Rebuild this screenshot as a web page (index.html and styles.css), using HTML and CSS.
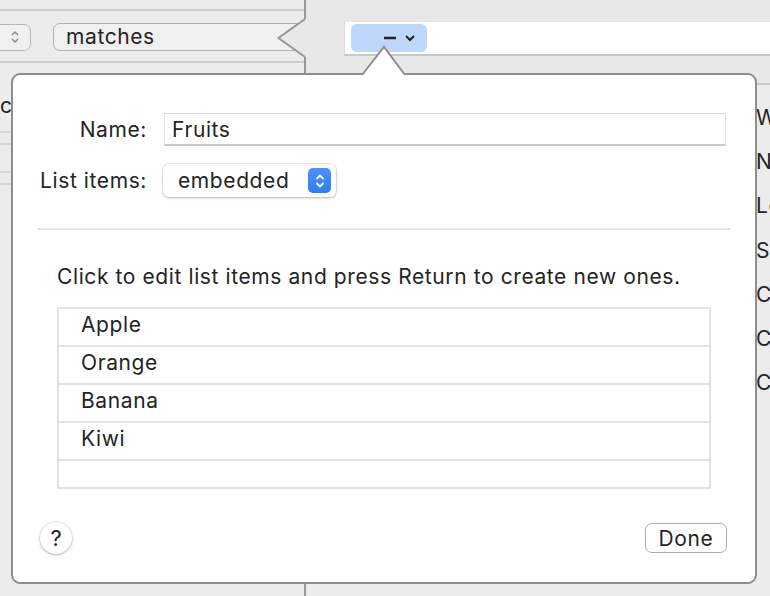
FILE: index.html
```html
<!DOCTYPE html>
<html lang="en">
<head>
    <meta charset="UTF-8">
    <title>List Editor</title>
    <link rel="stylesheet" href="styles.css">
</head>
<body>
    <div class="window">
        <div class="sidebar">
            <div class="sb-head"></div>
            <div class="cond-row">
                <div class="stepper">
                    <svg width="10" height="16" viewBox="0 0 10 16">
                        <polyline points="2,6 5,3 8,6" fill="none" stroke="#8a8a8a" stroke-width="1.5"/>
                        <polyline points="2,10 5,13 8,10" fill="none" stroke="#8a8a8a" stroke-width="1.5"/>
                    </svg>
                </div>
                <div class="cond-field">matches</div>
            </div>
            <div class="sb-item">c</div>
            <div class="sb-rule"></div>
            <div class="sb-rule short"></div>
            <div class="sb-rule tall"></div>
            <div class="sb-rule short"></div>
        </div>
        <div class="main">
            <div class="token-bar">
                <span class="token">
                    <svg width="36" height="12" viewBox="0 0 36 12">
                        <line x1="0" y1="6" x2="12" y2="6" stroke="#222" stroke-width="2.5"/>
                        <polyline points="22,4 26,8 30,4" fill="none" stroke="#222" stroke-width="2"/>
                    </svg>
                </span>
            </div>
            <div class="inspector">
                <div>W</div>
                <div>N</div>
                <div>Le</div>
                <div>Sy</div>
                <div>C</div>
                <div>C</div>
                <div>C</div>
            </div>
        </div>
    </div>

    <!-- flecha do painel da esquerda -->
    <svg class="notch" width="34" height="76" viewBox="0 0 34 76">
        <polygon points="29,19 2.5,38 29,57 34,57 34,19" fill="#e8e8e8"/>
        <polyline points="29,19 2.5,38 29,57" fill="none" stroke="#979797" stroke-width="2"/>
    </svg>

    <div class="popover">
        <svg class="arrow" width="48" height="34" viewBox="0 0 48 34">
            <polygon points="1,33 3,29 24,2 44,29 46,33" fill="#fff"/>
            <polyline points="2,30 24,2 45,30" fill="none" stroke="#8e8e8e" stroke-width="2"/>
        </svg>

        <div class="form">
            <label class="form-label">Name:</label>
            <div class="text-field">Fruits</div>

            <label class="form-label">List items:</label>
            <div class="popup">
                <span>embedded</span>
                <span class="popup-arrows">
                    <svg width="12" height="18" viewBox="0 0 12 18">
                        <polyline points="2.5,7 6,3.5 9.5,7" fill="none" stroke="#fff" stroke-width="1.8"/>
                        <polyline points="2.5,11 6,14.5 9.5,11" fill="none" stroke="#fff" stroke-width="1.8"/>
                    </svg>
                </span>
            </div>
        </div>

        <div class="separator"></div>

        <p class="hint">Click to edit list items and press Return to create new ones.</p>

        <div class="list">
            <div class="list-row">Apple</div>
            <div class="list-row">Orange</div>
            <div class="list-row">Banana</div>
            <div class="list-row">Kiwi</div>
            <div class="list-row empty"></div>
        </div>

        <div class="footer">
            <button class="help">?</button>
            <button class="done">Done</button>
        </div>
    </div>
</body>
</html>
```

FILE: styles.css
```css
body {
    margin: 0;
    width: 770px;
    height: 596px;
    overflow: hidden;
    position: relative;
    background-color: #e8e8e8;
    font-family: Inter, "Noto Sans", sans-serif;
    font-size: 21px;
    letter-spacing: 0.6px;
    color: #242424;
}

.window {
    display: flex;
    height: 596px;
}

/* painel da esquerda (atrás do popover) */
.sidebar {
    width: 304px;
    flex-shrink: 0;
    background-color: #ececec;
    border-right: 2px solid #979797;
    overflow: hidden;
}
.sb-head {
    height: 9px;
    border-bottom: 2px solid #d0d0d0;
}
.cond-row {
    display: flex;
    align-items: center;
    gap: 22px;
    height: 52px;
    padding-top: 2px;
    box-sizing: border-box;
    border-bottom: 2px solid #cdcdcd;
}
.stepper {
    width: 40px;
    height: 27px;
    flex-shrink: 0;
    margin-left: -9px;
    box-sizing: border-box;
    border: 1.5px solid #b5b5b5;
    border-radius: 7px;
    display: flex;
    align-items: center;
    justify-content: flex-end;
    padding-right: 10px;
    background-color: #f0f0f0;
}
.cond-field {
    width: 270px;
    height: 28px;
    flex-shrink: 0;
    box-sizing: border-box;
    border: 1.5px solid #b0b0b0;
    border-radius: 7px;
    padding-left: 12px;
    line-height: 25px;
    background-color: #f0f0f0;
}
.sb-item {
    height: 58px;
    box-sizing: border-box;
    padding-top: 31px;
    line-height: 24px;
}
.sb-rule {
    height: 10px;
    border-bottom: 2px solid #d6d6d6;
}
.sb-rule.tall {
    height: 26px;
}

/* area principal */
.main {
    flex: 1;
}
.token-bar {
    margin: 22px 0 0 38px;
    height: 32px;
    background-color: #fff;
    border-left: 1px solid #dcdcdc;
    border-bottom: 2px solid #c8c8c8;
    display: flex;
    align-items: center;
    padding-left: 6px;
}
.token {
    width: 76px;
    height: 28px;
    border-radius: 6px;
    background-color: #bed8fb;
    display: flex;
    align-items: center;
    justify-content: flex-end;
    padding-right: 7px;
    box-sizing: border-box;
}
.inspector {
    margin-top: 27px;
    border-top: 2px solid #c8c8c8;
    background-color: #ececec;
    height: 520px;
    padding-left: 450px;
    padding-top: 19px;
    box-sizing: border-box;
}
.inspector div {
    height: 44.2px;
    line-height: 28px;
}

.notch {
    position: absolute;
    left: 276px;
    top: 0;
}

/* popover */
.popover {
    position: absolute;
    left: 11px;
    top: 73px;
    width: 746px;
    height: 511px;
    box-sizing: border-box;
    background-color: #fff;
    border: 2px solid #8e8e8e;
    border-radius: 9px;
    display: flex;
    flex-direction: column;
}
.popover .arrow {
    position: absolute;
    left: 347px;
    top: -30px;
}

.form {
    display: grid;
    grid-template-columns: 134px 1fr;
    column-gap: 17px;
    row-gap: 18px;
    align-items: center;
    padding: 38px 29px 0 0;
}
.form-label {
    text-align: right;
}
.text-field {
    height: 33px;
    box-sizing: border-box;
    border: 1px solid #e2e2e2;
    border-top-color: #d9d9d9;
    border-bottom: 2px solid #c9c9c9;
    padding-left: 7px;
    line-height: 31px;
}
.popup {
    width: 173px;
    height: 33px;
    margin-left: -1px;
    box-sizing: border-box;
    border-radius: 6px;
    background-color: #fff;
    box-shadow: 0 0 0 1px rgba(0, 0, 0, 0.08), 0 1px 3px rgba(0, 0, 0, 0.22);
    display: flex;
    align-items: center;
    justify-content: space-between;
    padding: 0 5px 0 15px;
}
.popup-arrows {
    width: 23px;
    height: 25px;
    border-radius: 5px;
    background: linear-gradient(#4c93f8, #2f7cf4);
    display: flex;
    align-items: center;
    justify-content: center;
}

.separator {
    margin: 31px 25px 0 25px;
    border-top: 2px solid #e3e3e3;
}

.hint {
    margin: 35px 0 0 44px;
    line-height: 24px;
}

.list {
    margin: 18px 44px 0 44px;
    border: 2px solid #e3e3e3;
}
.list-row {
    height: 36px;
    line-height: 31px;
    padding-left: 22px;
}
.list-row + .list-row {
    border-top: 2px solid #e3e3e3;
}
.list-row.empty {
    height: 26px;
}

.footer {
    display: flex;
    justify-content: space-between;
    align-items: center;
    margin-top: 33px;
    padding: 0 28px 0 27px;
}
.help {
    width: 32px;
    height: 32px;
    border-radius: 50%;
    border: none;
    background-color: #fff;
    box-shadow: 0 0 0 1px rgba(0, 0, 0, 0.07), 0 1px 3px rgba(0, 0, 0, 0.25);
    font-family: Inter, sans-serif;
    font-size: 22px;
    color: #1e1e1e;
    padding: 0;
}
.done {
    width: 82px;
    height: 30px;
    box-sizing: border-box;
    border: 1.5px solid #ababab;
    border-radius: 7px;
    background-color: #fff;
    font-family: Inter, sans-serif;
    font-size: 21px;
    letter-spacing: 0.6px;
    color: #242424;
    padding: 0;
}
```
